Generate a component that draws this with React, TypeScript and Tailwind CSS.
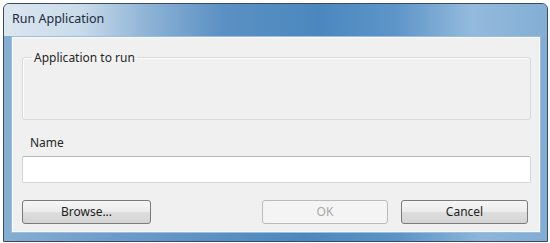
import React from 'react'

const btn =
  'h-[24px] rounded-[3px] border text-[12px] flex items-center justify-center'

export default function App() {
  return (
    <div className="w-[550px] h-[243px] bg-white pt-[3px] pl-[3px] font-['Noto_Sans',sans-serif] text-[#1e1e1e]">
      {/* window frame */}
      <div className="w-[545px] h-[239px] rounded-t-[6px] border border-[#3c4c5e] bg-[linear-gradient(90deg,#86aed3_0%,#6d9ccb_20%,#4b87be_55%,#5a93c7_72%,#8db6da_88%,#80acd4_100%)] flex flex-col">
        {/* title bar */}
        <div className="h-[32px] flex items-center pl-[8px] rounded-t-[5px] bg-[linear-gradient(90deg,#dbe6f0_0%,#c9dbea_14%,#8fb4d6_26%,#5b91c4_40%,#4b87be_58%,#5d95c8_72%,#93badc_86%,#84aed5_100%)]">
          <span className="text-[12.5px] text-[#1d2a39] pb-[2px]">Run Application</span>
        </div>

        {/* client area */}
        <div className="flex-1 ml-[7px] mr-[6px] mb-[8px] border border-[#9fbcd8] shadow-[inset_0_0_0_1px_#f8fbfd] bg-[#f0f0f0] px-[10px] pt-[13px] flex flex-col">
          <fieldset className="h-[70px] border border-[#d9d9d9] rounded-[3px] shadow-[inset_1px_1px_0_#ffffff] mr-[-1px]">
            <legend className="ml-[9px] px-[2px] text-[12px] leading-[15px] text-[#262626]">Application to run</legend>
          </fieldset>

          <label className="mt-[15px] ml-[8px] text-[12px] leading-[15px] text-[#262626]">Name</label>
          <input
            type="text"
            className="mt-[6px] h-[27px] w-[509px] rounded-[2px] border border-[#d2d6da] border-t-[#b5b9bd] bg-white outline-none px-[4px] text-[12px]"
          />

          <div className="mt-[17px] flex items-center">
            <button className={`${btn} w-[129px] border-[#7a7a7a] bg-[linear-gradient(180deg,#f6f6f6_0%,#ececec_48%,#dedede_52%,#d4d4d4_100%)] text-[#1e1e1e]`}>
              Browse...
            </button>
            <button
              disabled
              className={`${btn} w-[126px] ml-[111px] border-[#b8bcc0] bg-[#f4f4f4] text-[#a8a8a8]`}>
              OK
            </button>
            <button className={`${btn} w-[127px] ml-[13px] border-[#7a7a7a] bg-[linear-gradient(180deg,#f6f6f6_0%,#ececec_48%,#dedede_52%,#d4d4d4_100%)] text-[#1e1e1e]`}>
              Cancel
            </button>
          </div>
        </div>
      </div>
    </div>
  )
}
